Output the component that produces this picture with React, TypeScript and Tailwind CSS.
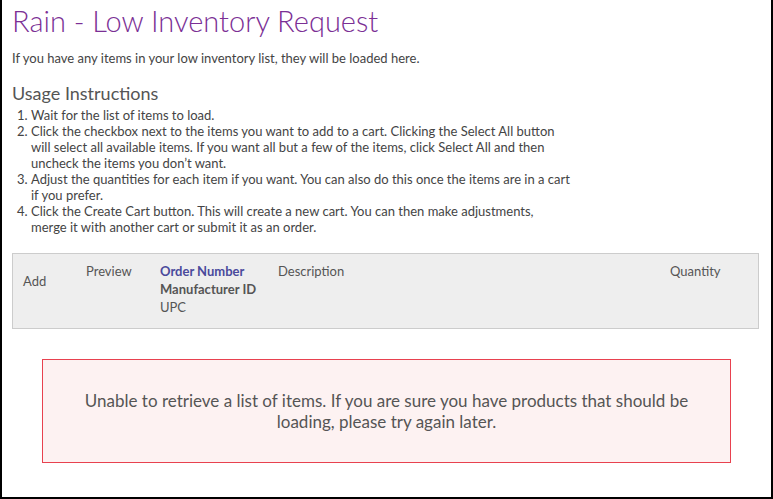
const steps = [
  "Wait for the list of items to load.",
  "Click the checkbox next to the items you want to add to a cart. Clicking the Select All button will select all available items. If you want all but a few of the items, click Select All and then uncheck the items you don\u2019t want.",
  "Adjust the quantities for each item if you want. You can also do this once the items are in a cart if you prefer.",
  "Click the Create Cart button. This will create a new cart. You can then make adjustments, merge it with another cart or submit it as an order.",
];

export default function App() {
  return (
    <div className="w-[773px] h-[499px] overflow-hidden bg-white border-l-2 border-r-2 border-b-2 border-black font-['Lato',sans-serif] text-[#444]">
      <div className="pl-[10px] pr-[10px]">
        <h1 className="pt-[3px] text-[29px] leading-[36px] font-light text-[#7b2f95]">
          Rain - Low Inventory Request
        </h1>
        <p className="mt-[11px] text-[13px] leading-[16px] text-[#444]">
          If you have any items in your low inventory list, they will be loaded here.
        </p>
        <h2 className="mt-[17px] text-[18px] leading-[20px] text-[#555]">Usage Instructions</h2>
        <ol className="mt-[4px] pl-[19px] w-[559px] list-decimal text-[13px] leading-[16px] text-[#444]">
          {steps.map((s) => (
            <li key={s}>{s}</li>
          ))}
        </ol>

        <div className="mt-[18px] mr-[2px] h-[76px] bg-[#eeeeee] border border-[#cccccc] flex text-[13px] leading-[18px] text-[#555]">
          <div className="w-[73px] pl-[10px] pt-[18px]">Add</div>
          <div className="w-[74px] pt-[8px]">Preview</div>
          <div className="w-[118px] pt-[8px]">
            <div className="font-bold text-[#4a4a9c]">Order Number</div>
            <div className="font-bold text-[#555]">Manufacturer ID</div>
            <div>UPC</div>
          </div>
          <div className="flex-1 pt-[8px]">Description</div>
          <div className="w-[88px] pt-[8px]">Quantity</div>
        </div>

        <div className="mt-[30px] mx-[30px] h-[104px] bg-[#fdf2f2] border border-[#e8414f] flex items-center justify-center px-[30px]">
          <p className="text-center text-[17px] leading-[21px] text-[#555]">
            Unable to retrieve a list of items. If you are sure you have products that should be loading, please try again later.
          </p>
        </div>
      </div>
    </div>
  );
}
